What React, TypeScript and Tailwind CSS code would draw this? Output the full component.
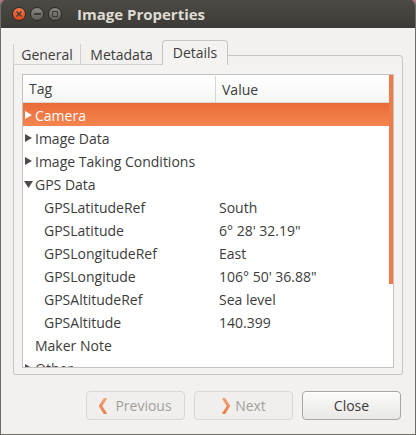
import React from "react";

const font = { fontFamily: '"Open Sans", "Noto Sans", "Liberation Sans", sans-serif' };

type Row = { tag: string; value?: string; level: 0 | 1; expander?: "closed" | "open"; selected?: boolean };

const rows: Row[] = [
  { tag: "Camera", level: 0, expander: "closed", selected: true },
  { tag: "Image Data", level: 0, expander: "closed" },
  { tag: "Image Taking Conditions", level: 0, expander: "closed" },
  { tag: "GPS Data", level: 0, expander: "open" },
  { tag: "GPSLatitudeRef", value: "South", level: 1 },
  { tag: "GPSLatitude", value: "6° 28' 32.19\"", level: 1 },
  { tag: "GPSLongitudeRef", value: "East", level: 1 },
  { tag: "GPSLongitude", value: "106° 50' 36.88\"", level: 1 },
  { tag: "GPSAltitudeRef", value: "Sea level", level: 1 },
  { tag: "GPSAltitude", value: "140.399", level: 1 },
  { tag: "Maker Note", level: 0 },
  { tag: "Other", level: 0, expander: "closed" },
];

function Expander({ kind, light }: { kind: "closed" | "open"; light?: boolean }) {
  const fill = light ? "#ffffff" : "#4c4c4c";
  return (
    <svg width="9" height="10" viewBox="0 0 9 10" className="shrink-0">
      {kind === "closed" ? (
        <polygon points="1,1 8,5 1,9" fill={fill} />
      ) : (
        <polygon points="0,2 9,2 4.5,9" fill={fill} />
      )}
    </svg>
  );
}

function TitleButton({ kind }: { kind: "close" | "min" | "max" }) {
  if (kind === "close") {
    return (
      <div className="flex h-[14px] w-[14px] items-center justify-center rounded-full border border-[#2b2a27] bg-gradient-to-b from-[#f7764a] to-[#dd4814]">
        <svg width="6" height="6" viewBox="0 0 6 6">
          <path d="M0.5 0.5 L5.5 5.5 M5.5 0.5 L0.5 5.5" stroke="#3c3b37" strokeWidth="1.4" />
        </svg>
      </div>
    );
  }
  return (
    <div className="flex h-[14px] w-[14px] items-center justify-center rounded-full border border-[#2b2a27] bg-gradient-to-b from-[#8a8882] to-[#5f5e59]">
      {kind === "min" ? (
        <div className="h-[1.5px] w-[7px] bg-[#3c3b37]" />
      ) : (
        <div className="h-[6px] w-[6px] border border-[#3c3b37]" />
      )}
    </div>
  );
}

function Chevron({ dir }: { dir: "left" | "right" }) {
  return (
    <svg width="9" height="16" viewBox="0 0 9 16" className="shrink-0">
      <defs>
        <linearGradient id={`chev-${dir}`} x1="0" y1="0" x2="0" y2="1">
          <stop offset="0" stopColor="#f3a06b" />
          <stop offset="1" stopColor="#e5834f" />
        </linearGradient>
      </defs>
      {dir === "left" ? (
        <path d="M6 1 L1.5 8 L6 15" fill="none" stroke={`url(#chev-${dir})`} strokeWidth="3.2" strokeLinecap="round" strokeLinejoin="round" />
      ) : (
        <path d="M3 1 L7.5 8 L3 15" fill="none" stroke={`url(#chev-${dir})`} strokeWidth="3.2" strokeLinecap="round" strokeLinejoin="round" />
      )}
    </svg>
  );
}

export default function App() {
  return (
    <div className="h-[435px] w-[416px] overflow-hidden bg-[#c26c8a]" style={font}>
      <div className="flex h-full w-full flex-col overflow-hidden rounded-t-[5px] border-x border-b border-[#6f6d68] bg-[#f2f1f0]">
        {/* title bar */}
        <div className="flex h-[28px] shrink-0 items-center bg-gradient-to-b from-[#4b4a45] to-[#3c3b37] pl-[11px]">
          <div className="flex items-center gap-[4px]">
            <TitleButton kind="close" />
            <TitleButton kind="min" />
            <TitleButton kind="max" />
          </div>
          <div className="ml-[15px] text-[15px] font-bold leading-none text-[#dfdbd2]">Image Properties</div>
        </div>

        {/* notebook */}
        <div className="mt-[13px] flex flex-col px-[12px]">
          <div className="flex h-[24px] items-end">
            <div className="flex h-[21px] w-[67px] items-center justify-center border-l border-b border-[#d3d0cc] text-[14px] text-[#3c3c3c]">
              General
            </div>
            <div className="flex h-[21px] w-[82px] items-center justify-center border-l border-b border-[#d3d0cc] text-[14px] text-[#3c3c3c]">
              Metadata
            </div>
            <div className="flex h-[25px] w-[66px] items-center justify-center rounded-t-[4px] border-x border-t border-[#c8c5c1] bg-[#f4f3f2] pb-[1px] text-[14px] text-[#3c3c3c]">
              Details
            </div>
            <div className="h-[10px] flex-1 rounded-tr-[4px] border-r border-t border-[#c8c5c1]" />
          </div>
          <div className="flex h-[310px] flex-col rounded-b-[3px] border-x border-b border-[#c8c5c1] bg-[#f4f3f2] px-[8px] pb-[6px] pt-[9px]">
            <div className="relative flex-1 overflow-hidden border border-[#c4c2be] bg-white">
              <div className="flex h-[28px] items-center border-b border-[#d8d6d3] bg-gradient-to-b from-white to-[#f6f6f5] pt-[1px] text-[14px] text-[#3c3c3c]">
                <div className="w-[193px] border-r border-[#d8d6d3] pl-[6px] leading-[26px]">Tag</div>
                <div className="pl-[6px]">Value</div>
              </div>
              {rows.map((r) => (
                <div
                  key={r.tag}
                  className={`flex h-[23px] items-center pt-[1px] text-[14px] ${
                    r.selected ? "bg-gradient-to-b from-[#e96b38] to-[#f5854f] text-white" : "text-[#3c3c3c]"
                  }`}
                >
                  <div className={`flex w-[196px] items-center ${r.level === 1 ? "pl-[21px]" : "pl-[1px]"}`}>
                    {r.level === 0 && (r.expander ? <Expander kind={r.expander} light={r.selected} /> : <div className="w-[9px]" />)}
                    <span className={r.level === 0 ? "pl-[2px]" : ""}>{r.tag}</span>
                  </div>
                  {r.value && <div>{r.value}</div>}
                </div>
              ))}
              <div className="absolute right-0 top-0 h-[209px] w-[4px] bg-[#f07a48]" />
            </div>
          </div>
        </div>

        {/* buttons */}
        <div className="mt-[16px] flex justify-end gap-[9px] pr-[14px]">
          <div className="flex h-[29px] w-[99px] items-center justify-center gap-[7px] rounded-[4px] border border-[#d9d7d3] bg-[#f0efee] text-[14px] text-[#a29f9a]">
            <Chevron dir="left" />
            Previous
          </div>
          <div className="flex h-[29px] w-[99px] items-center justify-center gap-[5px] rounded-[4px] border border-[#d9d7d3] bg-[#f0efee] text-[14px] text-[#a29f9a]">
            <Chevron dir="right" />
            Next
          </div>
          <div className="flex h-[29px] w-[99px] items-center justify-center rounded-[4px] border border-[#a9a6a1] bg-gradient-to-b from-[#fbfbfa] to-[#e9e8e6] text-[14px] text-[#3c3c3c] shadow-[inset_0_1px_0_#ffffff]">
            Close
          </div>
        </div>
      </div>
    </div>
  );
}
